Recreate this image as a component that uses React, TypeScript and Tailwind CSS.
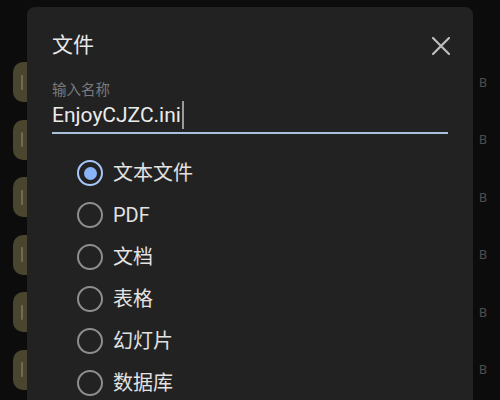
import React from 'react';

const font = "font-['Roboto','Noto_Sans_CJK_SC',sans-serif]";

const options = ['文本文件', 'PDF', '文档', '表格', '幻灯片', '数据库'];

const BackgroundRow: React.FC = () => (
  <div className="flex h-10 items-center justify-between pr-[13px]">
    <div className="ml-[13px] flex h-10 w-8 items-center rounded-[10px] bg-[#49452f] pl-[8px]">
      <div className="h-[15px] w-[2px] rounded bg-[#6f6b55]" />
    </div>
    <span className="text-[13px] leading-none text-[#4d4d4d]">B</span>
  </div>
);

const Radio: React.FC<{ checked: boolean }> = ({ checked }) => (
  <div
    className={
      checked
        ? 'flex h-[26px] w-[26px] items-center justify-center rounded-full border-[2.5px] border-[#a8c7fa]'
        : 'h-[26px] w-[26px] rounded-full border-[2.5px] border-[#8e8e8e]'
    }
  >
    {checked && <div className="h-[13px] w-[13px] rounded-full bg-[#8ab4f8]" />}
  </div>
);

export default function App() {
  return (
    <div className={`relative h-[400px] w-[500px] overflow-hidden bg-[#0c0c0c] ${font}`}>
      <div className="flex flex-col gap-[17.5px] pt-[62px]">
        {Array.from({ length: 6 }).map((_, i) => (
          <BackgroundRow key={i} />
        ))}
      </div>

      <div className="absolute left-[27px] top-[7px] h-[420px] w-[446px] rounded-[8px] bg-[#222222] px-[25px] pt-[28px]">
        <div className="flex items-center justify-between">
          <h2 className="text-[21px] leading-[21px] text-[#e8e8e8]">文件</h2>
          <svg width="18" height="18" viewBox="0 0 18 18" className="mr-[-2px]">
            <path d="M1 1L17 17M17 1L1 17" stroke="#bdbdbd" strokeWidth="2.2" strokeLinecap="square" />
          </svg>
        </div>

        <div className="mt-[27px] text-[14.5px] leading-[16px] text-[#7b7b7b]">输入名称</div>
        <div className="mt-[2px] flex h-[33px] items-start border-b-2 border-[#a9c0dd] pb-[3px]">
          <span className="text-[21px] leading-[28px] text-[#ebebeb]">EnjoyCJZC.ini</span>
          <span className="ml-[1px] h-[28px] w-[2px] bg-[#9a9a9a]" />
        </div>

        <div className="mt-[18px] flex flex-col pl-[25px]">
          {options.map((label, i) => (
            <div key={label} className="flex h-[42px] items-center gap-[10px]">
              <Radio checked={i === 0} />
              <span className="text-[20px] leading-none text-[#e3e3e3]">{label}</span>
            </div>
          ))}
        </div>
      </div>
    </div>
  );
}
